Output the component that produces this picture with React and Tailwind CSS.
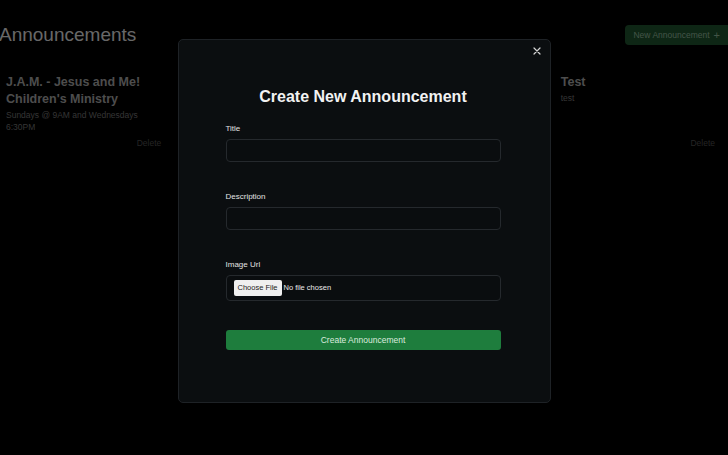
import React from "react";

function Card({ title, sub, className = "" }) {
  return (
    <div className={"flex flex-col " + className}>
      <h2 className="text-[12.5px] font-bold leading-[17px] text-[#9a9a9a]">{title}</h2>
      <p className="mt-[1px] text-[8.5px] leading-[12px] text-[#6a6a6a]">{sub}</p>
      <div className="mt-auto flex justify-end pt-[4px]">
        <button className="text-[8.5px] leading-[12px] text-[#4a4a4a]">Delete</button>
      </div>
    </div>
  );
}

export default function App() {
  return (
    <div className="relative min-h-[455px] w-full overflow-hidden bg-black" style={{ fontFamily: "'Liberation Sans', Arial, sans-serif" }}>
      <div className="flex items-center justify-between pt-[22px]">
        <h1 className="-ml-[1px] text-[19px] font-normal leading-[26px] text-[#d0d0d0]">Announcements</h1>
        <button className="-mr-[6px] flex h-[20px] items-center gap-[4px] rounded-[4px] bg-[#1d4d2b] pl-[8px] pr-[14px] text-[8.5px] text-[#86a88f]">
          New Announcement <span className="text-[11px] leading-none">+</span>
        </button>
      </div>
      <div className="mt-[26px] grid grid-cols-4 gap-x-[20px] pl-[6px] pr-[13px]">
        <Card className="pr-[7px]" title="J.A.M. - Jesus and Me! Children's Ministry" sub="Sundays @ 9AM and Wednesdays 6:30PM" />
        <div />
        <div />
        <Card className="pl-[8px]" title="Test" sub="test" />
      </div>

      <div className="fixed inset-0 flex items-start justify-center bg-black/50 pt-[39px]">
        <div className="relative h-[364px] w-[373px] rounded-[5px] border border-[#1e2226] bg-[#0b0e10] pl-[47px] pr-[49px] pt-[46px]">
          <button className="absolute right-[8px] top-[6px] p-[1px]" aria-label="Close">
            <svg width="8" height="8" viewBox="0 0 8 8" fill="none" stroke="#d4d4d4" strokeWidth="1.2" strokeLinecap="round">
              <path d="M1 1l6 6M7 1L1 7" />
            </svg>
          </button>
          <h2 className="text-center text-[16px] font-bold leading-[22px] text-[#f2f2f2]">Create New Announcement</h2>

          <label className="mt-[15px] block text-[8px] leading-[12px] text-[#e2e2e2]">Title</label>
          <div className="mt-[4px] h-[23px] rounded-[4px] border border-[#25292d] bg-[#0a0d0f]" />

          <label className="mt-[29px] block text-[8px] leading-[12px] text-[#e2e2e2]">Description</label>
          <div className="mt-[4px] h-[23px] rounded-[4px] border border-[#25292d] bg-[#0a0d0f]" />

          <label className="mt-[29px] block text-[8px] leading-[12px] text-[#e2e2e2]">Image Url</label>
          <div className="mt-[4px] flex h-[26px] items-center gap-[2px] rounded-[4px] border border-[#25292d] bg-[#0a0d0f] pl-[7px]">
            <span className="flex h-[16px] items-center rounded-[2px] bg-[#efefef] px-[4px] text-[7.5px] text-[#222]">Choose File</span>
            <span className="text-[7.5px] text-[#e8e8e8]">No file chosen</span>
          </div>

          <button className="mt-[29px] flex h-[20px] w-full items-center justify-center rounded-[3px] bg-[#1e7d3d] text-[8.5px] text-[#dcebdf]">
            Create Announcement
          </button>
        </div>
      </div>
    </div>
  );
}
